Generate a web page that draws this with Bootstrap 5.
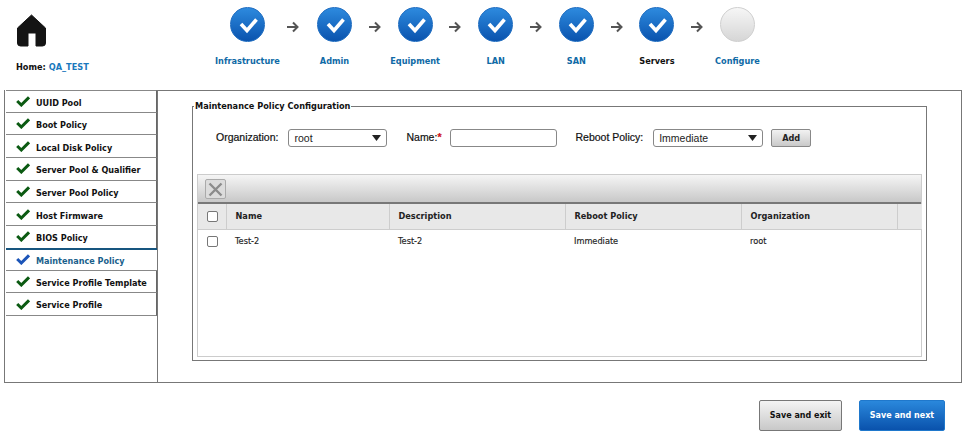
<!doctype html>
<html lang="en">

<head>
    <meta charset="utf-8">
    <meta name="viewport" content="width=device-width, initial-scale=1">
    <title>Maintenance Policy</title>
    <link href="https://cdn.jsdelivr.net/npm/bootstrap@5.3.3/dist/css/bootstrap.min.css" rel="stylesheet">
    <style>
        body {
            background-color: #fff;
            font-family: "DejaVu Sans", sans-serif;
            font-size: 8.2px;
            font-weight: 700;
            color: #111;
        }

        .pageWrap {
            width: 969px;
            height: 438px;
            overflow: hidden;
        }

        .topBar {
            height: 90px;
        }

        .homeBlock {
            width: 230px;
            padding: 14px 0 0 16px;
        }

        .homeBlock svg {
            display: block;
            margin: 0 0 14px 1px;
        }

        .homeName {
            color: #1a78bd;
        }

        .wizard {
            padding-top: 7px;
        }

        .wizStep {
            width: 35px;
        }

        .wizCircle {
            width: 35px;
            height: 35px;
            border-radius: 50%;
            background: linear-gradient(#2d8ade, #0a53ae);
            border: 1px solid #1e6cc0;
            margin-bottom: 13px;
        }

        .wizCircle.todo {
            background: linear-gradient(#f6f6f6, #d6d6d6);
            border-color: #cfcfcf;
        }

        .wizLabel {
            color: #0f6aa6;
            white-space: nowrap;
        }

        .wizLabel.current {
            color: #111;
        }

        .wizArrow {
            width: 45.6px;
            height: 35px;
            padding-top: 5px;
        }

        .wizArrow.wide {
            width: 52px;
            padding-left: 4px;
        }

        .mainArea {
            margin-left: 4px;
            width: 958px;
            height: 293px;
        }

        .sideMenu {
            width: 153px;
            padding-left: 1px;
            border: 1px solid #777;
            border-right: 0;
            border-top: 0;
        }

        .sideMenu .list-group-item {
            height: 22.7px;
            padding: 0 0 0 10px;
            gap: 6px;
            background: transparent;
            color: #111;
            font-size: 8.1px;
            white-space: nowrap;
            border: 0;
            border-bottom: 1px solid #888;
            border-right: 1px solid #666;
            border-radius: 0;
        }

        .sideMenu .list-group-item span {
            padding-top: 3px;
        }

        .sideMenu .list-group-item:first-child {
            border-top: 1px solid #888;
        }

        .sideMenu .list-group-item.activeStep {
            color: #1a5f8c;
            border-top: 2px solid #17557f;
            margin-top: -1px;
            border-right-width: 0;
        }

        .contentPanel {
            min-width: 0;
            border: 1px solid #777;
            padding: 9px 34px 21px 34px;
        }

        .policyBox {
            border: 1px solid #777;
            height: 261px;
            padding: 0 4px 3px 4px;
        }

        .policyBox legend {
            float: none;
            width: auto;
            font-size: 8.2px;
            font-weight: 700;
            line-height: 12px;
            margin: 0 0 0 -3px;
            padding: 0 1px;
        }

        .formRow {
            margin-top: 17px;
            height: 18px;
            padding-left: 19px;
            font-family: "Liberation Sans", sans-serif;
            font-size: 10.5px;
            font-weight: 400;
            -webkit-text-stroke: 0.2px #111;
        }

        .formRow select,
        .formRow input {
            height: 18px;
            border: 1px solid #888;
            border-radius: 3px;
            padding: 1px 0 0 5px;
            font-family: "Liberation Sans", sans-serif;
            font-size: 10.5px;
            color: #222;
            -webkit-text-stroke: 0;
            box-shadow: none;
        }

        .formRow select {
            background-image: url("data:image/svg+xml,%3Csvg xmlns='http://www.w3.org/2000/svg' width='10' height='6'%3E%3Cpath d='M0 0h10L5 6z' fill='%23222'/%3E%3C/svg%3E");
            background-size: 9px 6px;
            background-position: right 5px center;
        }

        .orgSelect {
            width: 99px;
            margin: 0 19px 0 10px;
        }

        .nameInput {
            width: 107px;
            margin: 0 18px 0 9px;
        }

        .rebootSelect {
            width: 110px;
            margin: 0 8px 0 10px;
        }

        .redStar {
            color: #d01020;
            font-weight: 700;
            -webkit-text-stroke: 0.2px #d01020;
        }

        .addBtn {
            width: 40px;
            height: 18px;
            padding: 0;
            font-family: "DejaVu Sans", sans-serif;
            font-size: 8.2px;
            font-weight: 700;
            color: #222;
            border: 1px solid #888;
            border-radius: 2px;
            background: linear-gradient(#f2f2f2, #c9c9c9);
            -webkit-text-stroke: 0;
        }

        .gridBox {
            margin-top: 27px;
            height: 183px;
            border: 1px solid #ccc;
        }

        .gridTools {
            height: 29px;
            padding: 4px 0 0 7px;
            background: linear-gradient(#f5f5f5, #c8c8c8);
            border-bottom: 2px solid #777;
        }

        .clearBtn {
            width: 21px;
            height: 20px;
            padding: 0;
            border: 1px solid #aaa;
            border-radius: 2px;
            background: #dcdcdc;
        }

        .clearBtn svg {
            display: block;
            margin: auto;
        }

        .policyTable {
            table-layout: fixed;
            width: 724px;
            margin: 0;
            font-size: 8.2px;
        }

        .policyTable th,
        .policyTable td {
            padding: 0 0 0 9px;
            vertical-align: middle;
            color: #222;
            box-shadow: none;
        }

        .policyTable th:first-child,
        .policyTable td:first-child {
            padding-left: 7px;
        }

        .policyTable th {
            height: 25px;
            background: #e8e8e8;
            border-right: 1px solid #cdcdcd;
            border-bottom: 1px solid #cdcdcd;
            font-weight: 700;
        }

        .policyTable th:last-child {
            border-right: 0;
        }

        .policyTable td {
            height: 24px;
            border: 0;
            font-weight: 400;
            -webkit-text-stroke: 0.15px #222;
        }

        .policyTable .form-check-input {
            display: block;
            width: 11px;
            height: 11px;
            margin: 0 0 0 2px;
            border: 1px solid #777;
            border-radius: 2px;
        }

        .pageActions {
            margin-top: 17px;
            padding-right: 24px;
            gap: 17px;
        }

        .pageActions .btn {
            height: 31px;
            padding: 0;
            font-size: 8px;
            font-weight: 700;
            border-radius: 2px;
        }

        .exitBtn {
            width: 83px;
            color: #111;
            border: 1px solid #777;
            background: linear-gradient(#f4f4f4, #c8c8c8);
        }

        .nextBtn {
            width: 86px;
            color: #fff;
            border: 1px solid #1f78cc;
            background: linear-gradient(#2a88dc, #0a52ac);
        }
    </style>
</head>

<body>
    <div class="pageWrap">
        <div class="topBar d-flex">
            <div class="homeBlock">
                <svg width="29" height="33" viewBox="0 0 29 33">
                    <path fill="#141414" stroke="#141414" stroke-linejoin="round" d="M14.5 1 L28.5 14 V29 a3 3 0 0 1 -3 3 H19 V19 H11 V32 H3.5 a3 3 0 0 1 -3 -3 V14 Z" />
                </svg>
                <div>Home: <span class="homeName">QA_TEST</span></div>
            </div>
            <div class="wizard d-flex align-items-start" id="wizard"></div>
        </div>

        <div class="mainArea d-flex">
            <div class="sideMenu flex-shrink-0">
                <div class="list-group" id="sideMenu"></div>
            </div>
            <div class="contentPanel flex-grow-1">
                <fieldset class="policyBox">
                    <legend>Maintenance Policy Configuration</legend>
                    <div class="formRow d-flex align-items-center">
                        <label>Organization:</label>
                        <select class="form-select orgSelect">
                            <option>root</option>
                        </select>
                        <label>Name:<span class="redStar">*</span></label>
                        <input type="text" class="form-control nameInput">
                        <label>Reboot Policy:</label>
                        <select class="form-select rebootSelect">
                            <option>Immediate</option>
                        </select>
                        <button class="btn addBtn">Add</button>
                    </div>
                    <div class="gridBox">
                        <div class="gridTools">
                            <button class="btn clearBtn" aria-label="Delete">
                                <svg width="15" height="15" viewBox="0 0 15 15">
                                    <path d="M1.5 1.5 L13.5 13.5 M13.5 1.5 L1.5 13.5" stroke="#8c8c8c" stroke-width="2.4" />
                                </svg>
                            </button>
                        </div>
                        <table class="table policyTable">
                            <colgroup>
                                <col style="width: 28px">
                                <col style="width: 163px">
                                <col style="width: 176px">
                                <col style="width: 176px">
                                <col style="width: 156px">
                                <col style="width: 25px">
                            </colgroup>
                            <thead>
                                <tr>
                                    <th><input class="form-check-input" type="checkbox"></th>
                                    <th>Name</th>
                                    <th>Description</th>
                                    <th>Reboot Policy</th>
                                    <th>Organization</th>
                                    <th></th>
                                </tr>
                            </thead>
                            <tbody>
                                <tr>
                                    <td><input class="form-check-input" type="checkbox"></td>
                                    <td>Test-2</td>
                                    <td>Test-2</td>
                                    <td>Immediate</td>
                                    <td>root</td>
                                    <td></td>
                                </tr>
                            </tbody>
                        </table>
                    </div>
                </fieldset>
            </div>
        </div>

        <div class="pageActions d-flex justify-content-end">
            <button class="btn exitBtn">Save and exit</button>
            <button class="btn nextBtn">Save and next</button>
        </div>
    </div>

    <script src="https://cdn.jsdelivr.net/npm/bootstrap@5.3.3/dist/js/bootstrap.bundle.min.js"></script>
    <script>
        const steps = [
            { name: "Infrastructure", done: true },
            { name: "Admin", done: true },
            { name: "Equipment", done: true },
            { name: "LAN", done: true },
            { name: "SAN", done: true },
            { name: "Servers", done: true, current: true },
            { name: "Configure", done: false }
        ];

        const menuItems = ["UUID Pool", "Boot Policy", "Local Disk Policy", "Server Pool & Qualifier", "Server Pool Policy",
            "Host Firmware", "BIOS Policy", "Maintenance Policy", "Service Profile Template", "Service Profile"];

        const arrow = `<svg width="12" height="12" viewBox="0 0 12 12"><path d="M0 6 H10 M6 1.5 L10.5 6 L6 10.5" fill="none" stroke="#555" stroke-width="2"/></svg>`;
        const tick = `<svg width="33" height="33" viewBox="0 0 33 33"><path d="M10 16 L16 22.5 L25.5 11.5" fill="none" stroke="#fff" stroke-width="3.6"/></svg>`;

        document.getElementById("wizard").innerHTML = steps.map((step, i) => {
            const circle = `<div class="wizStep d-flex flex-column align-items-center">
                <div class="wizCircle ${step.done ? "" : "todo"}">${step.done ? tick : ""}</div>
                <div class="wizLabel ${step.current ? "current" : ""}">${step.name}</div>
            </div>`;
            if (i === steps.length - 1) return circle;
            return circle + `<div class="wizArrow ${i === 0 ? "wide" : ""} d-flex align-items-center justify-content-center">${arrow}</div>`;
        }).join("");

        document.getElementById("sideMenu").innerHTML = menuItems.map((item) => {
            const active = item === "Maintenance Policy";
            const color = active ? "#1c55b8" : "#0b5a12";
            return `<div class="list-group-item d-flex align-items-center ${active ? "activeStep" : ""}">
                <svg width="14" height="11" viewBox="0 0 14 11"><path d="M1.2 5 L5.3 9 L13 1.3" fill="none" stroke="${color}" stroke-width="3"/></svg>
                <span>${item.replace("&", "&amp;")}</span>
            </div>`;
        }).join("");
    </script>
</body>

</html>
